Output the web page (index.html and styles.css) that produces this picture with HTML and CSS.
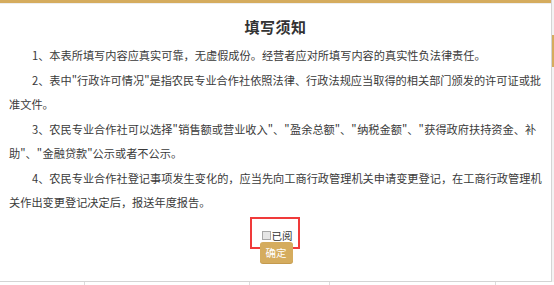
FILE: index.html
```html
<!DOCTYPE html>
<html lang="zh-CN">
<head>
  <meta charset="UTF-8" />
  <title>填写须知</title>
  <link rel="stylesheet" href="styles.css">
</head>
<body>
  <div class="screen">
    <div class="dialog">
      <div class="dialog-bar"></div>
      <h2 class="title">填写须知</h2>

      <div class="notes">
        <p>1、本表所填写内容应真实可靠，无虚假成份。经营者应对所填写内容的真实性负法律责任。</p>
        <p>2、表中"行政许可情况"是指农民专业合作社依照法律、行政法规应当取得的相关部门颁发的许可证或批准文件。</p>
        <p>3、农民专业合作社可以选择" 销售额或营业收入"、" 盈余总额"、" 纳税金额"、" 获得政府扶持资金、补助"、" 金融贷款"公示或者不公示。</p>
        <p>4、农民专业合作社登记事项发生变化的，应当先向工商行政管理机关申请变更登记，在工商行政管理机关作出变更登记决定后，报送年度报告。</p>
      </div>

      <div class="confirm">
        <div class="mark"></div>
        <label class="read"><input type="checkbox" id="readBox">已阅</label>
        <button class="btn-ok">确定</button>
      </div>
    </div>

    <div class="side">
      <div class="side-thumb"></div>
    </div>
  </div>

  <div class="table-edge">
    <div class="cell c1"></div>
    <div class="cell c2"></div>
    <div class="cell c3"></div>
    <div class="cell c4"></div>
    <div class="cell c5"></div>
  </div>
</body>
</html>
```

FILE: styles.css
```css
:root {
  --gold: #d5ac5e;
  --text: #3a3a3a;
  --line: #d4d4d4;
  --mark: #f03a3a;
}

* {
  box-sizing: border-box;
  margin: 0;
  padding: 0;
}

body {
  font-family: "Noto Sans CJK SC", "Noto Sans", sans-serif;
  background: #fff;
  color: var(--text);
  width: 554px;
  height: 285px;
  overflow: hidden;
}

.screen {
  display: flex;
  height: 282px;
}

.dialog {
  width: 552px;
  height: 282px;
  border-right: 1px solid var(--line);
  border-bottom: 1px solid var(--line);
  display: flex;
  flex-direction: column;
}

.dialog-bar {
  height: 4px;
  background: var(--gold);
  border-bottom: 1px solid #eee;
}

.title {
  margin-top: 13px;
  font-size: 15px;
  line-height: 20px;
  font-weight: 700;
  color: #333;
  text-align: center;
  letter-spacing: 0.5px;
}

.notes {
  margin-top: 6px;
  padding: 0 9px 0 9px;
  font-size: 11.2px;
  line-height: 24.5px;
  word-spacing: -2px;
}

.notes p {
  text-indent: 2.05em;
}

/* 已阅 + 确定 */
.confirm {
  position: relative;
  display: flex;
  flex-direction: column;
  align-items: center;
  margin-top: 14px;
  padding-left: 1px;
}

.mark {
  position: absolute;
  left: 250px;
  top: -12px;
  width: 50px;
  height: 32px;
  border: 2px solid var(--mark);
}

.read {
  display: flex;
  align-items: center;
  font-size: 10.5px;
  line-height: 14px;
  color: #333;
  margin-left: 2px;
}

.read input {
  appearance: none;
  width: 9px;
  height: 9px;
  border: 1px solid #a8a8a8;
  background: #e6e6e6;
  margin-right: 1px;
}

.btn-ok {
  position: relative;
  margin-top: -1px;
  width: 33px;
  height: 21px;
  border: none;
  border-radius: 3px;
  background: var(--gold);
  color: #fff;
  font-family: inherit;
  font-size: 10.5px;
  line-height: 21px;
  box-shadow: 0 1px 0 #c49a4e;
}

/* 右侧滚动条残影 */
.side {
  width: 2px;
  background: #f3f3f3;
}

.side-thumb {
  margin-top: 35px;
  height: 32px;
  background: var(--gold);
}

/* 底部表格线 */
.table-edge {
  display: flex;
  height: 3px;
}

.cell {
  border-right: 1px solid #dcdcdc;
}

.c1 { width: 85px; }
.c2 { width: 165px; }
.c3 { width: 80px; }
.c4 { width: 166px; }
.c5 { flex: 1; border-right: none; }
```
